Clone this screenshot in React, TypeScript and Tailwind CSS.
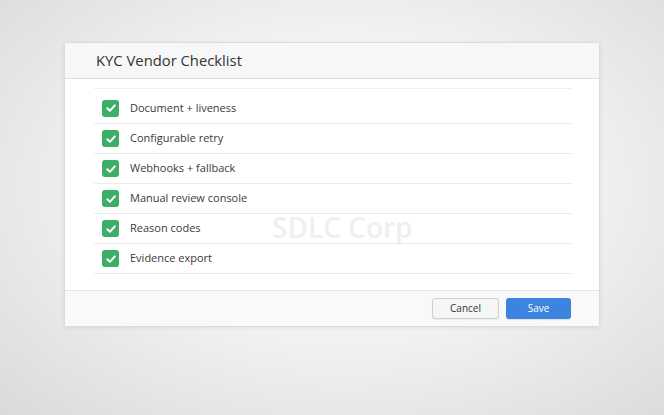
const items = [
  "Document + liveness",
  "Configurable retry",
  "Webhooks + fallback",
  "Manual review console",
  "Reason codes",
  "Evidence export",
];

const Check = () => (
  <span className="flex h-[17px] w-[17px] items-center justify-center rounded-[3px] bg-[#3dae68]">
    <svg width="12" height="12" viewBox="0 0 12 12" fill="none">
      <path d="M2.3 6.3 L4.9 8.8 L9.8 3.4" stroke="white" strokeWidth="2" strokeLinecap="round" strokeLinejoin="round" />
    </svg>
  </span>
);

export default function App() {
  return (
    <div
      className="relative h-[415px] w-[664px] overflow-hidden bg-[radial-gradient(ellipse_at_52%_45%,#fbfbfb_0%,#f3f3f4_45%,#dadadd_100%)] pt-[42px] pl-[64px]"
      style={{ fontFamily: '"Open Sans", "Noto Sans", sans-serif' }}
    >
      <div className="relative w-[536px] rounded-[3px] border border-[#dcdcdc] bg-white shadow-[0_1px_4px_rgba(0,0,0,0.08)]">
        <div className="flex h-[36px] items-center border-b border-[#dedede] bg-[#f7f7f7] pl-[31px] text-[14.8px] text-[#333]">
          KYC Vendor Checklist
        </div>
        <div className="pl-[29px] pr-[27px] pt-[9px] pb-[16px]">
          <div className="border-t border-[#efefef]">
            {items.map((t, i) => (
              <div
                key={t}
                className={`flex items-center gap-[11px] border-b border-[#ebebeb] pl-[8px] ${i === 0 ? "h-[35px] pt-[4px]" : "h-[30px]"}`}
              >
                <Check />
                <span className="text-[11px] text-[#3a3a3a]">{t}</span>
              </div>
            ))}
          </div>
        </div>
        <div className="flex h-[36px] items-center justify-end gap-[7px] border-t border-[#e6e6e6] bg-[#f9f9f9] pr-[28px]">
          <button className="h-[21px] w-[67px] rounded-[3px] border border-[#d0d0d0] bg-[#f5f5f5] text-[10px] text-[#333] shadow-[0_1px_1px_rgba(0,0,0,0.06)]">
            Cancel
          </button>
          <button className="h-[21px] w-[65px] rounded-[3px] bg-[#3d84e0] text-[10px] text-white shadow-[0_1px_1px_rgba(0,0,0,0.1)]">
            Save
          </button>
        </div>
        <div className="pointer-events-none absolute left-[207px] top-[163px] text-[28px] font-semibold text-[#efefef]">
          SDLC Corp
        </div>
      </div>
    </div>
  );
}
